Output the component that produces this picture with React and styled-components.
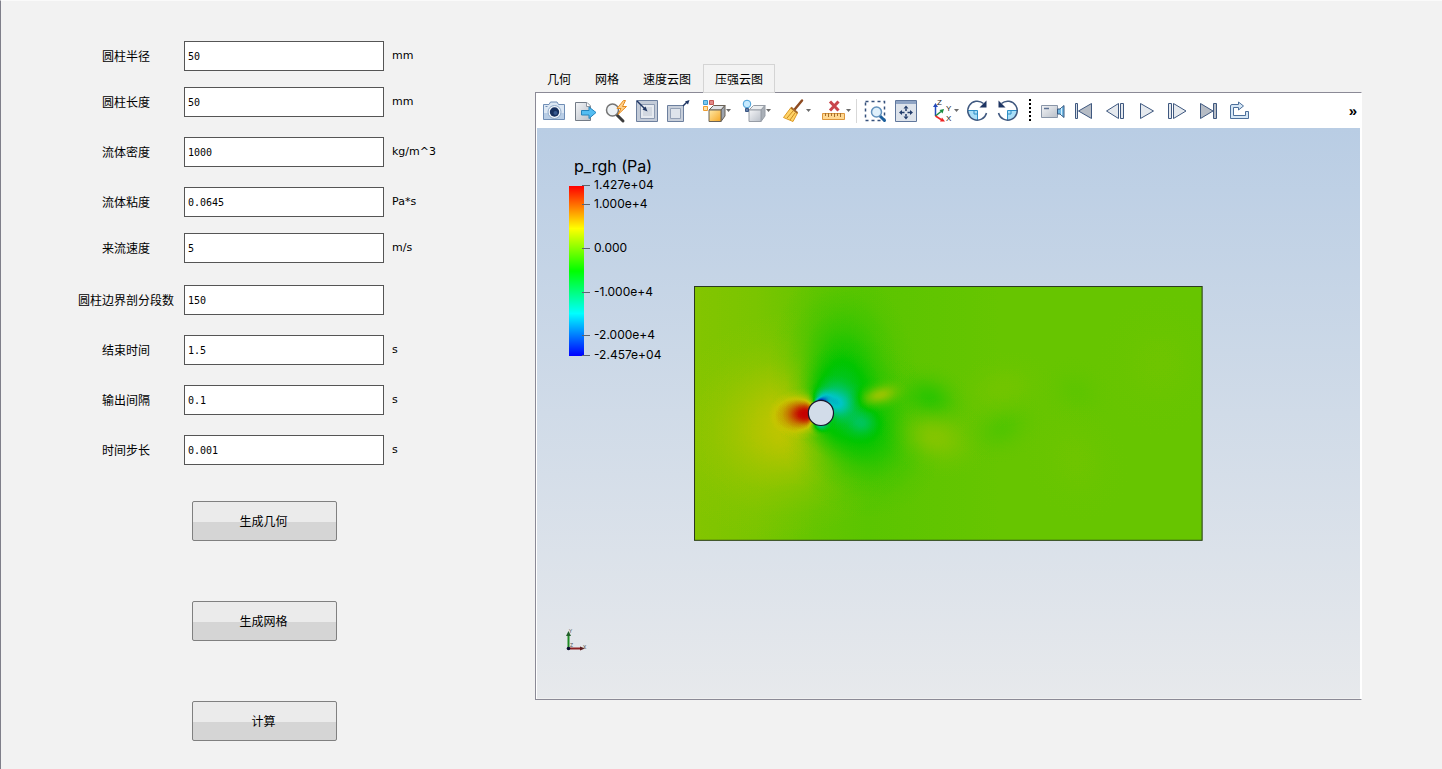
import React, { useState } from "react";
import styled, { createGlobalStyle } from "styled-components";

const GlobalStyle = createGlobalStyle`
  *, *::before, *::after { box-sizing: border-box; }
  body {
    margin: 0;
    background: #f2f2f2;
    color: #000;
    font-family: "DejaVu Sans", "Noto Sans CJK SC", sans-serif;
    font-size: 12px;
    line-height: 16px;
  }
`;

const cjk = `"Noto Sans CJK SC", "Open Sans", sans-serif`;

const Window = styled.main`
  display: flex;
  align-items: flex-start;
  min-height: 100vh;
  border-left: 1px solid #7f7f8a;
  border-top: 1px solid #fafafa;
`;

const Sidebar = styled.form`
  flex: 0 0 534px;
  padding: 40px 0 28px 67px;
`;

const Field = styled.div`
  display: flex;
  align-items: center;
  gap: 8px;
  margin-bottom: ${(p) => ({ tight: 16, wide: 22 })[p.$space] || 20}px;
`;

const FieldLabel = styled.label`
  width: 108px;
  padding-left: 8px;
  text-align: center;
  white-space: nowrap;
  font-family: ${cjk};
`;

const TextInput = styled.input`
  width: 200px;
  height: 30px;
  padding: 0 3px;
  border: 1px solid #555;
  border-radius: 0;
  background: #fff;
  color: #000;
  font-family: "DejaVu Sans Mono", monospace;
  font-size: 10px;
  outline: none;
`;

const Unit = styled.span`
  font-size: 11px;
`;

const Actions = styled.div`
  display: flex;
  flex-direction: column;
  align-items: flex-start;
  gap: 60px;
  padding: 16px 0 0 124px;
`;

const ActionButton = styled.button`
  width: 145px;
  height: 40px;
  padding: 0 2px 2px 0;
  border: 1px solid #808080;
  border-radius: 2px;
  background: linear-gradient(#ebebeb 0 52%, #d5d5d5 52% 100%);
  color: #000;
  font-family: ${cjk};
  font-size: 12px;
`;

const Viewer = styled.section`
  flex: 1;
  min-width: 0;
  padding: 63px 80px 0 0;
`;

const TabList = styled.div`
  display: flex;
  height: 29px;
  margin-bottom: -1px;
`;

const Tab = styled.button`
  position: relative;
  z-index: ${(p) => (p.$active ? 1 : 0)};
  padding: 0 11px;
  border: 1px solid ${(p) => (p.$active ? "#d4d4d4" : "transparent")};
  background: ${(p) => (p.$active ? "#f3f3f3" : "transparent")};
  color: #000;
  font-family: ${cjk};
  font-size: 12px;
`;

const Panel = styled.div`
  border: 1px solid #8b8a96;
  border-right-color: #fff;
  background: #fff;
`;

const Toolbar = styled.div`
  display: flex;
  align-items: center;
  height: 35px;
  padding: 0 4px 0 2px;
`;

const ToolButton = styled.button`
  display: flex;
  align-items: center;
  flex: none;
  width: ${(p) => (p.$menu ? 40 : 31)}px;
  height: 28px;
  padding: 0 0 0 ${(p) => (p.$menu ? 9 : 4)}px;
  border: 0;
  background: transparent;

  svg { display: block; flex: none; overflow: visible; }
`;

const Separator = styled.span`
  flex: none;
  width: 6px;
  height: 24px;
  border-left: 1px solid #d8d8d8;
  margin: 0 -3px 0 3px;
`;

const Handle = styled.span`
  flex: none;
  width: 2px;
  height: 24px;
  margin: 0 6px;
  background: repeating-linear-gradient(#000 0 2px, transparent 2px 4px);
`;

const Overflow = styled.button`
  margin-left: auto;
  padding: 0;
  border: 0;
  background: transparent;
  color: #000;
  font: bold 15px/20px "Liberation Sans", sans-serif;
`;

const Scene = styled.div`
  position: relative;
  display: flex;
  align-items: center;
  justify-content: center;
  height: calc(100vh - 198px);
  min-height: 420px;
  margin: 0 1px;
  border-bottom: 1px solid #f0f0f0;
  background: linear-gradient(#b9cde4, #e7e9ec);
`;

const Plot = styled.svg`
  display: block;
  width: 61.8%;
  overflow: visible;
`;

const Legend = styled.svg`
  position: absolute;
  left: 24px;
  top: 25px;
  font-family: Inter, sans-serif;
  font-size: 12px;
`;

const Axes = styled.svg`
  position: absolute;
  left: 26px;
  bottom: 42px;
`;

const FIELDS = [
  { id: "radius", label: "圆柱半径", value: "50", unit: "mm", space: "tight" },
  { id: "length", label: "圆柱长度", value: "50", unit: "mm" },
  { id: "density", label: "流体密度", value: "1000", unit: "kg/m^3" },
  { id: "viscosity", label: "流体粘度", value: "0.0645", unit: "Pa*s", space: "tight" },
  { id: "velocity", label: "来流速度", value: "5", unit: "m/s", space: "wide" },
  { id: "segments", label: "圆柱边界剖分段数", value: "150", unit: "" },
  { id: "end", label: "结束时间", value: "1.5", unit: "s" },
  { id: "interval", label: "输出间隔", value: "0.1", unit: "s" },
  { id: "step", label: "时间步长", value: "0.001", unit: "s" },
];

const TABS = ["几何", "网格", "速度云图", "压强云图"];

const TICKS = [
  [32, "1.427e+04"],
  [51, "1.000e+4"],
  [95, "0.000"],
  [139, "-1.000e+4"],
  [182, "-2.000e+4"],
  [202, "-2.457e+04"],
];

const navy = "#3f587f";

const Cube = ({ front, top, side, stroke }) => (
  <g stroke={stroke} strokeLinejoin="round">
    <path d="M7 11 11.5 6.500H23L19 11Z" fill={top} />
    <path d="M19 11 23 6.500V17L19 22.500Z" fill={side} />
    <path d="M7 11H19V22.500H7Z" fill={front} />
  </g>
);

const icons = {
  camera: (
    <>
      <path d="M1.500 5.500H7L8.500 3H15L16.500 5.500H22.500V20.500H1.500Z" fill="#dce7f3" stroke="#6f8db5" strokeLinejoin="round" />
      <path d="M2 14H22V20H2Z" fill="#b8cde5" />
      <path d="M3.500 7.500H5.500" stroke="#6f8db5" />
      <circle cx="12.500" cy="13" r="6.500" fill="#f3f7fb" stroke="#8fa9c9" />
      <circle cx="12.500" cy="13" r="4.700" fill="#17305f" />
      <circle cx="13.500" cy="14" r="2" fill="#38598f" />
    </>
  ),
  export: (
    <>
      <path d="M2.500 3.500H14L17.500 7V21.500H2.500Z" fill="url(#metal)" stroke="#737b86" />
      <path d="M13.500 3.500V7.500H17.500" fill="#fff" stroke="#8c949f" />
      <path d="M8.500 11.500H16V8L23 13.500 16 19.500V16H8.500Z" fill="#54bdf2" stroke="#2584bd" />
    </>
  ),
  zoomZap: (
    <>
      <path d="M13 16 19 22" stroke="#3c3c3c" strokeWidth="3" strokeLinecap="round" />
      <circle cx="8.500" cy="11" r="6" fill="#eef2f5" stroke="#747474" strokeWidth="1.500" />
      <path d="M19.500 1.500 13 9.500H17L14 15.500 22.500 7.500H18.500L21.500 1.500Z" fill="#ffd08a" stroke="#e58a1d" />
    </>
  ),
  zoomBox: (
    <>
      <path d="M1.500 1.500H22.500V22.500H1.500Z" fill="#c3cbd8" stroke="#6c7f9e" />
      <path d="M5.500 5.500H19.500V19.500H5.500Z" fill="#e6eaf0" stroke="#8d9bb2" />
      <path d="M8 8H17V17H8Z" fill="#d2d8e1" />
      <path d="M2 2 10 10" stroke="#1e3563" strokeWidth="1.500" />
      <path d="M12.500 12.500 7.500 10.500 10.500 7.500Z" fill="#1e3563" />
    </>
  ),
  zoomOut: (
    <>
      <path d="M1.500 6.500H17.500V22.500H1.500Z" fill="#c8cfda" stroke="#6c7f9e" />
      <path d="M4.500 9.500H14.500V19.500H4.500Z" fill="#dfe4eb" stroke="#94a1b6" />
      <path d="M17 7 21 3" stroke="#1e3563" strokeWidth="1.500" />
      <path d="M23.500 1 22 5.500 19 2.500Z" fill="#1e3563" />
    </>
  ),
  cubeColors: (
    <>
      <Cube front="url(#amber)" top="#dfe3e8" side="#9ba3af" stroke="#6a6257" />
      <path d="M1.500 1.500H5.500V5.500H1.500Z" fill="#7cc8ee" stroke="#3a9bd0" />
      <path d="M7.500 1.500H11.500V5.500H7.500Z" fill="#e08a88" stroke="#c75754" />
      <path d="M1.500 7.500H5.500V11.500H1.500Z" fill="#ffe2a5" stroke="#ee9d30" />
    </>
  ),
  cubeBulb: (
    <>
      <Cube front="url(#metal)" top="#eceef0" side="#a9afb7" stroke="#979da6" />
      <circle cx="5" cy="5" r="3.800" fill="#c6eaff" stroke="#459dd5" />
      <path d="M3.500 9.500H6.500V12.500H3.500Z" fill="#607eaa" stroke="#3c5783" />
    </>
  ),
  broom: (
    <>
      <path d="M13 10 20 1.500" stroke="#8e4b22" strokeWidth="2.500" strokeLinecap="round" />
      <path d="M9 8.500 15.500 14 11 22.500 1.500 18.500Z" fill="#ffd367" stroke="#dd9a25" strokeLinejoin="round" />
      <path d="M11 12 5 19M13 14 8 21" stroke="#c98a20" />
      <path d="M9 8.500 15.500 14" stroke="#a66b2b" strokeWidth="2" />
    </>
  ),
  rulerX: (
    <>
      <path d="M8 2.500 16.500 11.500M16.500 2.500 8 11.500" stroke="#c9454b" strokeWidth="3" />
      <path d="M.5 14.500H22.500V20.500H.5Z" fill="#ffd891" stroke="#dc963b" />
      <path d="M3.500 14V17M6.500 14V18M9.500 14V17M12.500 14V18M15.500 14V17M18.500 14V18" stroke="#a56f2e" />
    </>
  ),
  selectZoom: (
    <>
      <path d="M2.500 2.500H21.500V21.500H2.500Z" fill="none" stroke="#35507c" strokeWidth="1.500" strokeDasharray="3 3" />
      <path d="M17 17 21.500 21.500" stroke="#1c5f9c" strokeWidth="3" strokeLinecap="round" />
      <circle cx="13.500" cy="13" r="5" fill="#dff0fb" stroke="#6292bd" strokeWidth="1.500" />
    </>
  ),
  resetView: (
    <>
      <path d="M1.500 1.500H22.500V22.500H1.500Z" fill="#dde3eb" stroke="#60779c" />
      <path d="M2 2H22V5H2Z" fill="#8fa4c4" />
      <path d="M12 9.500V12M12 15V17.500M8 13.500H10.500M13.500 13.500H16" stroke="#233d6b" strokeWidth="1.500" />
      <path d="M12 6.500 14.500 9.500H9.500ZM12 20.500 14.500 17.500H9.500ZM5 13.500 8 11V16ZM19 13.500 16 11V16Z" fill="#233d6b" />
    </>
  ),
  axes: (
    <>
      <path d="M5.500 17V7" stroke="#2449ba" strokeWidth="1.500" />
      <path d="M5.500 4 8 8H3Z" fill="#2449ba" />
      <path d="M5.500 17 11 12.500" stroke="#198b3f" strokeWidth="1.500" />
      <path d="M14 10 12.500 14.500 9.500 11Z" fill="#198b3f" />
      <path d="M5.500 17 11 20.500" stroke="#e22" strokeWidth="1.500" />
      <path d="M15 22.500 10 22.500 12 18.500Z" fill="#e22" />
      <g fill="#222" fontFamily="Liberation Sans, sans-serif" fontSize="8">
        <text x="7" y="6">Z</text>
        <text x="16" y="12">Y</text>
        <text x="16" y="22">X</text>
      </g>
    </>
  ),
  rotateCw: (
    <>
      <path d="M2.500 11.500H12.500V21.500A10 10 0 0 1 2.500 11.500Z" fill="#a9def7" />
      <path d="M3 11.500H12.500V21M9 11.500V15H12.500" fill="none" stroke="#2e8fc7" />
      <path d="M18.500 4.500A9.500 9.500 0 1 0 21.500 14" fill="none" stroke={navy} strokeWidth="1.500" />
      <path d="M21.500 1.500V8.500H14.500Z" fill="#1e3563" />
    </>
  ),
  rotateCcw: (
    <>
      <path d="M21.500 11.500H11.500V21.500A10 10 0 0 0 21.500 11.500Z" fill="#a9def7" />
      <path d="M21 11.500H11.500V21M15 11.500V15H11.500" fill="none" stroke="#2e8fc7" />
      <path d="M5.500 4.500A9.500 9.500 0 1 1 2.500 14" fill="none" stroke={navy} strokeWidth="1.500" />
      <path d="M2.500 1.500V8.500H9.500Z" fill="#1e3563" />
    </>
  ),
  video: (
    <>
      <path d="M.5 6.500H16.500V18.500H.5Z" fill="url(#metal)" stroke="#8a96a8" />
      <path d="M3 9.500H8" stroke="#5e7394" strokeWidth="1.500" />
      <path d="M16.500 10 19 10 23 6.500V18.500L19 15H16.500Z" fill="#72b9e4" stroke="#35577f" />
      <path d="M20.500 9V16" stroke="#d4f0ff" />
    </>
  ),
  first: (
    <>
      <path d="M3.500 4.500H5.500V19.500H3.500Z" fill="#d7dee7" stroke={navy} />
      <path d="M19.500 4.500V19.500L6.500 12Z" fill="#b6bcc5" stroke={navy} />
    </>
  ),
  prev: (
    <>
      <path d="M15.500 4.500V19.500L3.500 12Z" fill="#e5e9ee" stroke={navy} />
      <path d="M17.500 4.500H20.500V19.500H17.500Z" fill="#e5e9ee" stroke={navy} />
    </>
  ),
  play: <path d="M6.500 4.500V19.500L19.500 12Z" fill="#e5e9ee" stroke={navy} />,
  next: (
    <>
      <path d="M3.500 4.500H6.500V19.500H3.500Z" fill="#e5e9ee" stroke={navy} />
      <path d="M8.500 4.500V19.500L21 12Z" fill="#e5e9ee" stroke={navy} />
    </>
  ),
  last: (
    <>
      <path d="M4.500 4.500V19.500L17 12Z" fill="#b6bcc5" stroke={navy} />
      <path d="M17.500 4.500H20.500V19.500H17.500Z" fill="#b6bcc5" stroke={navy} />
    </>
  ),
  loop: (
    <path
      d="M3.500 19.500V7Q3.500 5.500 5 5.500H11.500V3L16.500 7 11.500 11V8.500H6.500V16.500H18.500V12.500H21.500V19.500Z"
      fill="#d6e7f6"
      stroke="#4c6f9b"
      strokeLinejoin="round"
    />
  ),
};

const TOOLS = [
  { icon: "camera", label: "截图" },
  { icon: "export", label: "导出" },
  { icon: "zoomZap", label: "快速缩放" },
  { icon: "zoomBox", label: "缩放到数据" },
  { icon: "zoomOut", label: "缩放到窗口" },
  { icon: "cubeColors", label: "着色", menu: true },
  { icon: "cubeBulb", label: "光照", menu: true },
  { icon: "broom", label: "清除", menu: true },
  { icon: "rulerX", label: "删除标尺", menu: true },
  { separator: true },
  { icon: "selectZoom", label: "框选缩放" },
  { icon: "resetView", label: "重置视图" },
  { icon: "axes", label: "视角", menu: true },
  { icon: "rotateCw", label: "顺时针旋转" },
  { icon: "rotateCcw", label: "逆时针旋转" },
  { handle: true },
  { icon: "video", label: "录制" },
  { icon: "first", label: "第一帧" },
  { icon: "prev", label: "上一帧" },
  { icon: "play", label: "播放" },
  { icon: "next", label: "下一帧" },
  { icon: "last", label: "最后一帧" },
  { icon: "loop", label: "循环" },
];

function Tool({ icon, label, menu }) {
  return (
    <ToolButton type="button" aria-label={label} $menu={menu}>
      <svg width="24" height="24" viewBox="0 0 24 24" fill="none">{icons[icon]}</svg>
      {menu && (
        <svg width="5" height="3" viewBox="0 0 5 3"><path d="M0 0H5L2.500 3Z" fill="#6b6b6b" /></svg>
      )}
    </ToolButton>
  );
}

// Pressure samples: a grey level (0 = lowest, 255 = highest) falling off around a centre.
const SAMPLES = [
  { x: 98, y: 138, rx: 135, ry: 112, turn: -20, level: 190 },
  { x: 150, y: 92, rx: 74, ry: 112, turn: -6, level: 128 },
  { x: 168, y: 142, rx: 82, ry: 92, turn: -24, level: 128 },
  { x: 145, y: 106, rx: 44, ry: 44, turn: 0, level: 112 },
  { x: 148, y: 140, rx: 50, ry: 34, turn: 8, level: 124 },
  { x: 167, y: 137, rx: 26, ry: 22, turn: 0, level: 98 },
  { x: 187, y: 109, rx: 36, ry: 17, turn: -14, level: 176 },
  { x: 235, y: 113, rx: 46, ry: 36, turn: 18, level: 142 },
  { x: 242, y: 152, rx: 56, ry: 38, turn: 18, level: 170 },
  { x: 308, y: 142, rx: 46, ry: 34, turn: -30, level: 154 },
  { x: 309, y: 102, rx: 54, ry: 38, turn: -15, level: 164 },
  { x: 383, y: 106, rx: 40, ry: 34, turn: 35, level: 158 },
  { x: 382, y: 174, rx: 52, ry: 66, turn: -20, level: 163 },
  { x: 466, y: 78, rx: 64, ry: 72, turn: 0, level: 163 },
  { x: 110, y: 128, rx: 36, ry: 26, turn: 0, level: 255 },
  { x: 112, y: 128, rx: 14, ry: 12, turn: 0, level: 255 },
  { x: 143, y: 117, rx: 32, ry: 27, turn: 25, level: 60 },
  { x: 131, y: 113, rx: 17, ry: 13, turn: 0, level: 50 },
  { x: 127, y: 138, rx: 14, ry: 12, turn: 0, level: 70 },
  { x: 127, y: 115, rx: 9, ry: 5, turn: 0, level: 0 },
];

const FALLOFF = [[0, 1], [0.15, 0.92], [0.3, 0.7], [0.45, 0.45], [0.6, 0.24], [0.8, 0.07], [1, 0]];

const grey = (level) => `rgb(${level},${level},${level})`;

function PressureField() {
  return (
    <Plot viewBox="0 0 509 255" role="img" aria-label="压强云图">
      <defs>
        <linearGradient id="flow">
          <stop offset="0" stopColor={grey(170)} />
          <stop offset="0.12" stopColor={grey(167)} />
          <stop offset="0.24" stopColor={grey(160)} />
          <stop offset="0.34" stopColor={grey(157)} />
          <stop offset="0.48" stopColor={grey(159)} />
          <stop offset="0.6" stopColor={grey(161)} />
          <stop offset="1" stopColor={grey(161)} />
        </linearGradient>
        {SAMPLES.map((s, i) => (
          <radialGradient key={i} id={`sample${i}`}>
            {FALLOFF.map(([offset, opacity]) => (
              <stop key={offset} offset={offset} stopColor={grey(s.level)} stopOpacity={opacity} />
            ))}
          </radialGradient>
        ))}
        <filter id="colormap" x="0" y="0" width="1" height="1" colorInterpolationFilters="sRGB">
          <feComponentTransfer>
            <feFuncR type="table" tableValues="0 0 0 0.775 0.775" />
            <feFuncG type="table" tableValues="0 0.775 0.775 0.775 0" />
            <feFuncB type="table" tableValues="0.775 0.775 0 0 0" />
          </feComponentTransfer>
        </filter>
        <clipPath id="domain"><rect width="509" height="255" /></clipPath>
      </defs>
      <g filter="url(#colormap)">
        <g clipPath="url(#domain)">
          <rect width="509" height="255" fill="url(#flow)" />
          {SAMPLES.map((s, i) => (
            <ellipse
              key={i}
              cx={s.x}
              cy={s.y}
              rx={s.rx}
              ry={s.ry}
              fill={`url(#sample${i})`}
              transform={`rotate(${s.turn} ${s.x} ${s.y})`}
            />
          ))}
        </g>
      </g>
      <circle cx="127" cy="127" r="12.600" fill="#d2dce9" stroke="#15172a" strokeWidth="1.200" />
      <rect x="0.500" y="0.500" width="508" height="254" fill="none" stroke="#2a3a20" />
    </Plot>
  );
}

function ColorLegend() {
  return (
    <Legend width="130" height="216" viewBox="0 0 130 216">
      <defs>
        <linearGradient id="rainbow" x2="0" y2="1">
          <stop offset="0" stopColor="#f00" />
          <stop offset="0.25" stopColor="#ff0" />
          <stop offset="0.5" stopColor="#0f0" />
          <stop offset="0.75" stopColor="#0ff" />
          <stop offset="1" stopColor="#00f" />
        </linearGradient>
      </defs>
      <text x="13" y="19" fontSize="16">p_rgh (Pa)</text>
      <rect x="8" y="33" width="15" height="170" fill="url(#rainbow)" />
      {TICKS.map(([y, text]) => (
        <React.Fragment key={text}>
          <path d={`M21 ${y + 0.5}H29`} stroke="#5c6470" />
          <text x="33" y={y + 4}>{text}</text>
        </React.Fragment>
      ))}
    </Legend>
  );
}

function AxesTriad() {
  return (
    <Axes width="30" height="30" viewBox="0 0 30 30">
      <path d="M5.500 22V9" stroke="#1e8a24" strokeWidth="2" />
      <path d="M5.500 5 8 10H3Z" fill="#22602a" />
      <path d="M5 22.500H18" stroke="#8c2022" strokeWidth="2" />
      <path d="M22 22.500 17 20.500V24.500Z" fill="#5c1c1e" />
      <circle cx="5.500" cy="22.500" r="1.800" fill="#0b0b30" />
      <g fill="#555" fontFamily="Lato, sans-serif" fontSize="5">
        <text x="6" y="7">Y</text>
        <text x="20" y="23">X</text>
        <text x="7" y="21">Z</text>
      </g>
    </Axes>
  );
}

export default function App() {
  const [values, setValues] = useState(() => Object.fromEntries(FIELDS.map((f) => [f.id, f.value])));
  const [tab, setTab] = useState("压强云图");

  return (
    <>
      <GlobalStyle />
      <Window>
        <Sidebar onSubmit={(e) => e.preventDefault()}>
          {FIELDS.map((f) => (
            <Field key={f.id} $space={f.space}>
              <FieldLabel htmlFor={f.id}>{f.label}</FieldLabel>
              <TextInput
                id={f.id}
                value={values[f.id]}
                onChange={(e) => setValues({ ...values, [f.id]: e.target.value })}
              />
              <Unit>{f.unit}</Unit>
            </Field>
          ))}
          <Actions>
            <ActionButton type="button">生成几何</ActionButton>
            <ActionButton type="button">生成网格</ActionButton>
            <ActionButton type="submit">计算</ActionButton>
          </Actions>
        </Sidebar>

        <Viewer>
          <TabList role="tablist">
            {TABS.map((name) => (
              <Tab
                key={name}
                type="button"
                role="tab"
                aria-selected={tab === name}
                $active={tab === name}
                onClick={() => setTab(name)}
              >
                {name}
              </Tab>
            ))}
          </TabList>
          <Panel>
            <svg width="0" height="0" display="block" aria-hidden="true">
              <defs>
                <linearGradient id="metal" x2="1" y2="1">
                  <stop offset="0" stopColor="#f4f5f7" />
                  <stop offset="1" stopColor="#b9bfc8" />
                </linearGradient>
                <linearGradient id="amber" x2="1" y2="1">
                  <stop offset="0" stopColor="#ffeaa8" />
                  <stop offset="1" stopColor="#f5a623" />
                </linearGradient>
              </defs>
            </svg>
            <Toolbar role="toolbar">
              {TOOLS.map((t, i) => {
                if (t.separator) return <Separator key={i} />;
                if (t.handle) return <Handle key={i} />;
                return <Tool key={i} {...t} />;
              })}
              <Overflow type="button" aria-label="更多">»</Overflow>
            </Toolbar>
            <Scene>
              <PressureField />
              <ColorLegend />
              <AxesTriad />
            </Scene>
          </Panel>
        </Viewer>
      </Window>
    </>
  );
}
